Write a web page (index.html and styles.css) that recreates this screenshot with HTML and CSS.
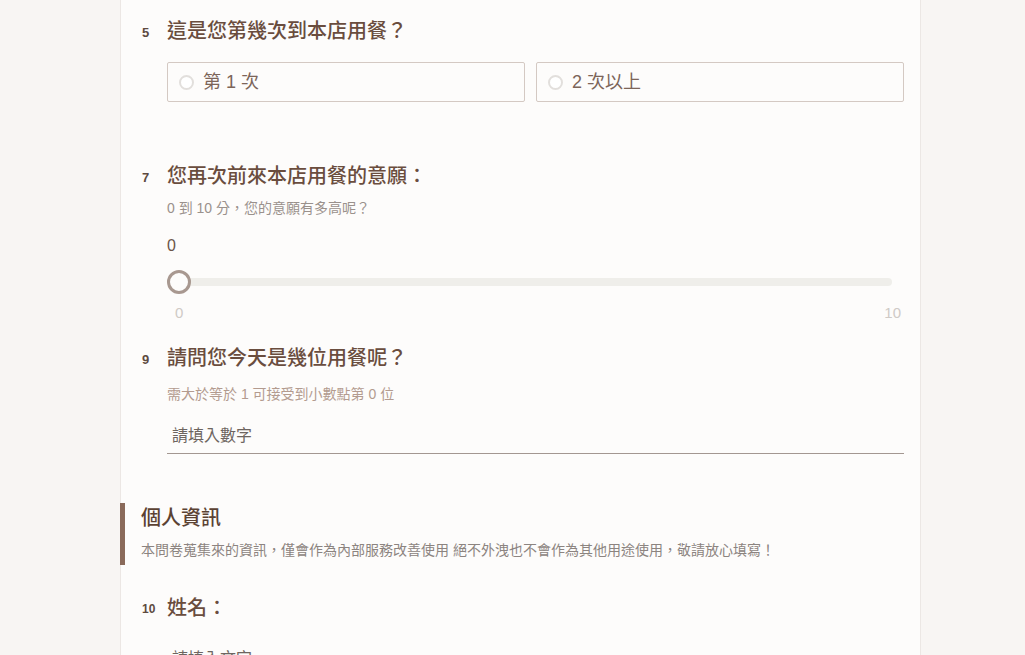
FILE: index.html
```html
<!DOCTYPE html>
<html lang="zh-Hant">
<head>
<meta charset="utf-8">
<link rel="stylesheet" href="styles.css">
</head>
<body>
<main class="card">
  <section class="q q5">
    <div class="q-head"><span class="q-num">5</span><h2 class="q-title">這是您第幾次到本店用餐？</h2></div>
    <div class="q-body">
      <div class="options">
        <label class="option"><span class="radio"></span><span class="opt-text">第 1 次</span></label>
        <label class="option"><span class="radio"></span><span class="opt-text">2 次以上</span></label>
      </div>
    </div>
  </section>

  <section class="q q7">
    <div class="q-head"><span class="q-num">7</span><h2 class="q-title">您再次前來本店用餐的意願：</h2></div>
    <div class="q-body">
      <p class="q-desc">0 到 10 分，您的意願有多高呢？</p>
      <div class="slider-value">0</div>
      <div class="slider">
        <div class="track"></div>
        <div class="thumb"></div>
      </div>
      <div class="slider-labels"><span>0</span><span>10</span></div>
    </div>
  </section>

  <section class="q q9">
    <div class="q-head"><span class="q-num">9</span><h2 class="q-title">請問您今天是幾位用餐呢？</h2></div>
    <div class="q-body">
      <p class="q-hint">需大於等於 1 可接受到小數點第 0 位</p>
      <div class="text-input"><span class="placeholder">請填入數字</span></div>
    </div>
  </section>

  <section class="section-head">
    <h3 class="section-title">個人資訊</h3>
    <p class="section-desc">本問卷蒐集來的資訊，僅會作為內部服務改善使用 絕不外洩也不會作為其他用途使用，敬請放心填寫！</p>
  </section>

  <section class="q q10">
    <div class="q-head"><span class="q-num q-num-sm">10</span><h2 class="q-title">姓名：</h2></div>
    <div class="q-body">
      <div class="text-input text-input-last"><span class="placeholder">請填入文字</span></div>
    </div>
  </section>
</main>
</body>
</html>
```

FILE: styles.css
```css
html, body {
  margin: 0;
  padding: 0;
  height: 655px;
  overflow: hidden;
}
body {
  background: #f8f5f3;
  font-family: "Liberation Sans", "Noto Sans CJK TC", sans-serif;
  color: #6b5448;
}
.card {
  margin-left: 120px;
  width: 801px;
  box-sizing: border-box;
  min-height: 720px;
  background: #fdfcfb;
  border-left: 1px solid #ece7e4;
  border-right: 1px solid #ece7e4;
  padding: 18px 16px 0 0;
}
.q {
  padding-left: 21px;
}
.q-head {
  display: flex;
  align-items: center;
  height: 26px;
}
.q-num {
  width: 25px;
  flex: none;
  font-size: 13px;
  font-weight: 700;
  color: #5e4a3f;
  padding-top: 2px;
}
.q-num-sm {
  font-size: 12px;
}
.q-title {
  margin: 0;
  font-size: 20px;
  line-height: 26px;
  font-weight: 500;
  color: #6a4d3e;
}
.q-body {
  padding-left: 25px;
}
.options {
  margin-top: 18px;
  display: grid;
  grid-template-columns: 358px 1fr;
  gap: 11px;
}
.option {
  height: 40px;
  box-sizing: border-box;
  border: 1px solid #d4c9c3;
  border-radius: 2px;
  display: flex;
  align-items: center;
  padding-left: 11px;
  gap: 9px;
}
.radio {
  width: 15px;
  height: 15px;
  box-sizing: border-box;
  border: 2px solid #e2dfdc;
  border-radius: 50%;
  background: #fff;
}
.opt-text {
  font-size: 18px;
  line-height: 22px;
  color: #7c6559;
  padding-bottom: 0;
}
.q7 {
  margin-top: 61px;
}
.q-desc {
  margin: 10px 0 0;
  font-size: 14px;
  line-height: 18px;
  color: #9a918c;
}
.slider-value {
  margin-top: 18px;
  font-size: 16px;
  line-height: 22px;
  color: #6b5448;
}
.slider {
  margin-top: 13px;
  position: relative;
  height: 24px;
  padding: 0 12px;
  display: flex;
  align-items: center;
}
.track {
  flex: 1;
  height: 8px;
  border-radius: 4px;
  background: #efeeea;
}
.thumb {
  position: absolute;
  left: 0;
  top: 0;
  width: 24px;
  height: 24px;
  box-sizing: border-box;
  border: 3px solid #a89890;
  border-radius: 50%;
  background: #fdfcfb;
}
.slider-labels {
  margin-top: 9px;
  display: flex;
  justify-content: space-between;
  padding: 0 3px 0 8px;
  font-size: 15px;
  line-height: 20px;
  color: #cfcac6;
}
.q9 {
  margin-top: 22px;
}
.q-hint {
  margin: 14px 0 0;
  font-size: 14px;
  line-height: 18px;
  color: #b39b8f;
}
.text-input {
  margin-top: 15px;
  height: 36px;
  box-sizing: border-box;
  border-bottom: 1px solid #a39791;
  padding-left: 5px;
  display: flex;
  align-items: center;
}
.placeholder {
  font-size: 16px;
  line-height: 20px;
  color: #6e6560;
}
.section-head {
  margin-top: 49px;
  border-left: 5px solid #8a6a5a;
  margin-left: -1px;
  padding: 2px 0 6px 16px;
}
.section-title {
  margin: 0;
  font-size: 20px;
  line-height: 26px;
  font-weight: 500;
  color: #5b4233;
}
.section-desc {
  margin: 10px 0 0;
  font-size: 14px;
  line-height: 18px;
  color: #8c8480;
}
.q10 {
  margin-top: 30px;
}
.text-input-last {
  margin-top: 20px;
}
```
